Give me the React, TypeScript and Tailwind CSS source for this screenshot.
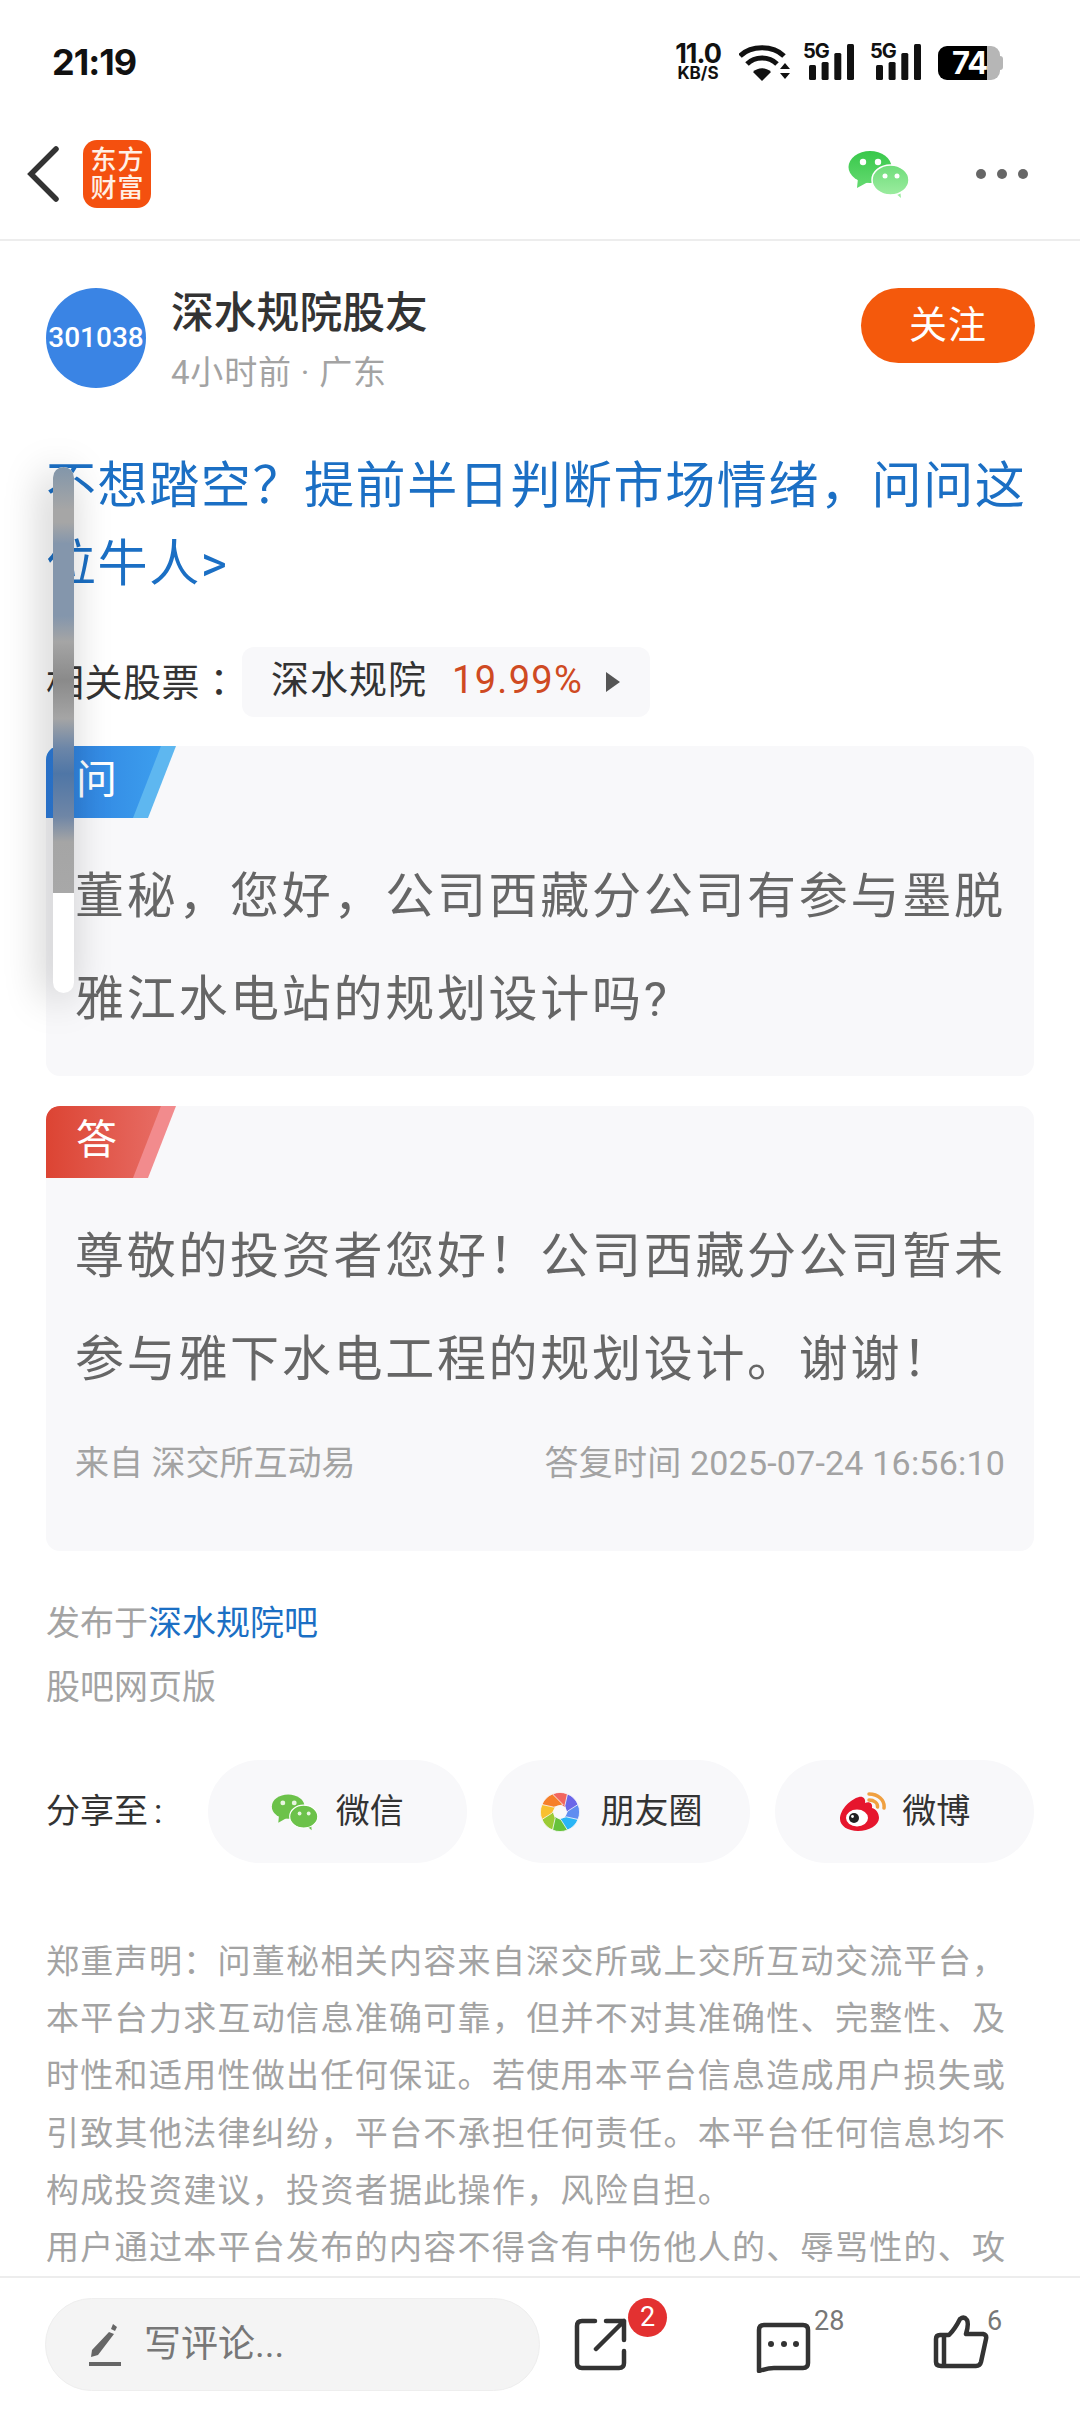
const cjk = "font-['Roboto','Noto_Sans_CJK_SC',sans-serif]";

function Signal() {
  return (
    <svg width="51" height="36" viewBox="0 0 51 36" className="fill-[#111]">
      <rect x="6" y="21" width="7" height="15" rx="1.5" />
      <rect x="18.6" y="18" width="7" height="18" rx="1.5" />
      <rect x="31.3" y="9" width="7" height="27" rx="1.5" />
      <rect x="44" y="0" width="7" height="36" rx="1.5" />
    </svg>
  );
}

function FiveG() {
  return (
    <div className="relative w-[51px] h-[36px]">
      <span className="absolute left-0 -top-[4px] text-[20px] leading-[22px] font-bold tracking-[-1px]">5G</span>
      <Signal />
    </div>
  );
}

function StatusBar() {
  return (
    <div className="h-[80px] shrink-0 pt-[44px] pl-[52px] pr-[77px] flex items-start justify-between">
      <span className="font-['Inter',sans-serif] font-bold text-[36px] leading-[36px] text-[#111] tracking-[-1px]">21:19</span>
      <div className="flex items-start font-['Inter',sans-serif] text-[#111]">
        <div className="flex flex-col items-center w-[50px] font-bold -mt-[2px]">
          <span className="text-[27px] leading-[24px] tracking-[-1px]">11.0</span>
          <span className="text-[17px] leading-[15px]">KB/S</span>
        </div>
        <svg width="52" height="37" viewBox="0 0 52 37" className="shrink-0 ml-[16px]">
          <path d="M1 12 C12 1 34 1 45 12" fill="none" stroke="#111" strokeWidth="5" />
          <path d="M8 20 C16 12 30 12 38 20" fill="none" stroke="#111" strokeWidth="5" />
          <path d="M14 28 C19 23 27 23 32 28 L23 37 Z" fill="#111" />
          <path d="M41 25 L46 19 L51 25 Z M41 29 L51 29 L46 35 Z" fill="#111" />
        </svg>
        <div className="ml-[12px]"><FiveG /></div>
        <div className="ml-[16px]"><FiveG /></div>
        <div className="relative w-[65px] h-[34px] ml-[17px] mt-[2px] flex">
          <div className="w-[49px] h-full bg-black rounded-l-[9px]" />
          <div className="w-[13px] h-full bg-[#b6b6b6] rounded-r-[9px]" />
          <div className="w-[3px] h-[14px] bg-[#b6b6b6] rounded-r-[3px] self-center" />
          <span className="absolute left-[14px] top-0 text-[31px] leading-[34px] font-bold text-white tracking-[-1px]">74</span>
        </div>
      </div>
    </div>
  );
}

type WeChatProps = { id: string; bigTop: string; bigBottom: string; smallTop: string; smallBottom: string; w: number; h: number; eye: string };

function WeChatLogo({ id, bigTop, bigBottom, smallTop, smallBottom, w, h, eye }: WeChatProps) {
  return (
    <svg width={w} height={h} viewBox="0 0 62 50" className="shrink-0">
      <defs>
        <linearGradient id={`${id}b`} x1="0" x2="0" y1="0" y2="1">
          <stop offset="0" stopColor={bigTop} />
          <stop offset="1" stopColor={bigBottom} />
        </linearGradient>
        <linearGradient id={`${id}s`} x1="0" x2="0" y1="0" y2="1">
          <stop offset="0" stopColor={smallTop} />
          <stop offset="1" stopColor={smallBottom} />
        </linearGradient>
      </defs>
      <path d="M10 29 L9 39 L20 33 Z" fill={bigBottom} />
      <ellipse cx="22" cy="18" rx="21.5" ry="16" fill={`url(#${id}b)`} />
      <circle cx="15" cy="13" r="3.2" fill={eye} />
      <circle cx="30" cy="13" r="3.2" fill={eye} />
      <path d="M46 43 L53 49 L52 40 Z" fill={smallBottom} />
      <ellipse cx="42.5" cy="31" rx="18.5" ry="15" fill={`url(#${id}s)`} stroke="#fff" strokeWidth="1.5" />
      <circle cx="37" cy="27" r="2.5" fill={eye} />
      <circle cx="49" cy="27" r="2.5" fill={eye} />
    </svg>
  );
}

function Header() {
  return (
    <div className={`h-[161px] shrink-0 border-b-2 border-[#ededed] flex items-center pl-[26px] pr-[52px] ${cjk}`}>
      <svg width="34" height="56" viewBox="0 0 34 56" className="mt-[28px]">
        <path d="M30 3 L5 28 L30 53" fill="none" stroke="#333" strokeWidth="5.5" strokeLinecap="round" />
      </svg>
      <div className="ml-[23px] mt-[28px] w-[68px] h-[68px] rounded-[14px] bg-[#f4500f] grid grid-cols-2 place-items-center px-[7px] py-[6px] text-[#fff0e6] text-[26px] leading-[28px] font-medium">
        <span>东</span><span>方</span><span>财</span><span>富</span>
      </div>
      <div className="ml-auto mt-[28px] flex items-center gap-[66px]">
        <WeChatLogo id="hd" bigTop="#38c84a" bigBottom="#5fd86c" smallTop="#6fdd7a" smallBottom="#9bec9f" w={62} h={50} eye="#ffffff" />
        <div className="flex gap-[11px]">
          <span className="w-[10px] h-[10px] rounded-full bg-[#666]" />
          <span className="w-[10px] h-[10px] rounded-full bg-[#666]" />
          <span className="w-[10px] h-[10px] rounded-full bg-[#666]" />
        </div>
      </div>
    </div>
  );
}

function Tag({ label, from, to, light }: { label: string; from: string; to: string; light: string }) {
  return (
    <div className="relative w-[130px] h-[72px]">
      <svg width="130" height="72" viewBox="0 0 130 72" className="absolute left-0 top-0">
        <defs>
          <linearGradient id={label} x1="0" x2="1" y1="0" y2="0">
            <stop offset="0" stopColor={from} />
            <stop offset="1" stopColor={to} />
          </linearGradient>
        </defs>
        <path d="M0 14 Q0 0 14 0 L130 0 L102 72 L0 72 Z" fill={light} />
        <path d="M0 14 Q0 0 14 0 L115 0 L87 72 L0 72 Z" fill={`url(#${label})`} />
      </svg>
      <span className="absolute left-[30px] top-0 text-[41px] leading-[68px] text-white">{label}</span>
    </div>
  );
}

function SharePill({ icon, label, gap }: { icon: React.ReactNode; label: string; gap: string }) {
  return (
    <div className={`flex-1 h-[103px] rounded-full bg-[#f8f8fa] flex items-center justify-center text-[34px] text-[#333] ${gap}`}>
      {icon}
      <span>{label}</span>
    </div>
  );
}

function Aperture() {
  const colors = ["#f2665f", "#6b66e8", "#5f8df0", "#2ab5f5", "#66c23b", "#9ccb35", "#f8c030", "#f67f2a"];
  return (
    <svg width="40" height="40" viewBox="-20.5 -20.5 41 41" className="shrink-0">
      {colors.map((c, i) => (
        <path key={c} d="M-7.65 -18.48 A20 20 0 0 1 7.65 -18.48 L7.5 -3 L-1 -8 Z" fill={c} stroke="#f8f8fa" strokeWidth="0.8" transform={`rotate(${i * 45})`} />
      ))}
      <circle r="7" fill="#f8f8fa" />
    </svg>
  );
}

function Weibo() {
  return (
    <svg width="47" height="41" viewBox="0 0 47 41" className="shrink-0">
      <path d="M1 28 C1 18 12 8 20 6 C24 5 27 8 26 12 C30 10 34 12 33 17 C37 18 40 22 40 27 C40 34 30 40 19 40 C9 40 1 35 1 28 Z" fill="#e6162d" />
      <ellipse cx="18" cy="27" rx="11" ry="8.5" fill="#fff" />
      <circle cx="15" cy="27" r="5" fill="#222" />
      <circle cx="13.5" cy="25.5" r="1.4" fill="#fff" />
      <path d="M30 3 C39 3 46 9 45 17" fill="none" stroke="#f0a040" strokeWidth="3.5" strokeLinecap="round" />
      <path d="M30 9 C35 9 39 12 38.5 16" fill="none" stroke="#f0a040" strokeWidth="3.5" strokeLinecap="round" />
    </svg>
  );
}

function Content() {
  return (
    <div className={`flex-1 min-h-0 overflow-hidden px-[46px] ${cjk}`}>
      <div className="pt-[46px] flex items-start">
        <div className="w-[100px] h-[100px] mt-[1px] shrink-0 rounded-full bg-[#3a84e4] flex items-center justify-center text-white text-[28px] font-medium">301038</div>
        <div className="ml-[25px] -mt-[3px]">
          <div className="text-[42.8px] leading-[58px] text-[#333] font-medium">深水规院股友</div>
          <div className="text-[33px] leading-[44px] mt-[9px] text-[#a3a3a3] tracking-[0.8px]">4小时前 · 广东</div>
        </div>
        <div className="ml-auto mr-[-1px] mt-[1px] w-[174px] h-[75px] rounded-full bg-[#f4590c] flex items-center justify-center text-white text-[38px] tracking-[1px]">关注</div>
      </div>

      <div className="mt-[52px] text-[#1b6fc4] text-[50px] leading-[78px] tracking-[1.6px]">不想踏空？提前半日判断市场情绪，问问这位牛人&gt;</div>

      <div className="mt-[44px] flex items-center h-[70px]">
        <span className="text-[38px] leading-[66px] self-start text-[#333] tracking-[0.5px] w-[196px]">相关股票<span className="font-['Noto_Sans_CJK_TC',sans-serif]">：</span></span>
        <div className="w-[408px] h-[70px] rounded-[12px] bg-[#f8f8fa] flex items-center pl-[29px] pr-[30px] text-[38px]">
          <span className="text-[#333] tracking-[1px] -mt-[3px]">深水规院</span>
          <span className="ml-[25px] text-[#cf4a22] tracking-[1.3px] -mt-[3px]">19.99%</span>
          <svg width="14" height="20" viewBox="0 0 14 20" className="ml-auto">
            <path d="M0 0 L14 10 L0 20 Z" fill="#555" />
          </svg>
        </div>
      </div>

      <div className="mt-[29px] h-[330px] rounded-[14px] bg-[#f8f8fa] overflow-hidden">
        <Tag label="问" from="#2d7cdc" to="#3c9eee" light="#5eb7f0" />
        <p className="mt-[27px] pl-[29px] pr-[20px] text-[49px] leading-[103px] text-[#666] tracking-[2.7px]">董秘，您好，公司西藏分公司有参与墨脱雅江水电站的规划设计吗?</p>
      </div>

      <div className="mt-[30px] h-[445px] rounded-[14px] bg-[#f8f8fa] overflow-hidden">
        <Tag label="答" from="#dc4433" to="#e76c64" light="#f28b8d" />
        <p className="mt-[27px] pl-[29px] pr-[20px] text-[49px] leading-[103px] text-[#666] tracking-[2.7px]">尊敬的投资者您好！公司西藏分公司暂未参与雅下水电工程的规划设计。谢谢！</p>
        <div className="mt-[27px] pl-[29px] pr-[29px] flex justify-between text-[34px] leading-[50px] text-[#a3a3a3]">
          <span>来自 深交所互动易</span>
          <span className="tracking-[0.2px]">答复时间 2025-07-24 16:56:10</span>
        </div>
      </div>

      <div className="mt-[41px] text-[34px] leading-[62px] text-[#a3a3a3]">
        <div>发布于<span className="text-[#1b6fc4]">深水规院吧</span></div>
        <div className="mt-[2px]">股吧网页版</div>
      </div>

      <div className="mt-[42px] flex items-center">
        <span className="w-[162px] shrink-0 text-[34px] text-[#333]">分享至<span className="ml-[6px]">:</span></span>
        <div className="flex-1 flex gap-[25px]">
          <SharePill gap="gap-[17px]" icon={<WeChatLogo id="sh" bigTop="#6cc24a" bigBottom="#6cc24a" smallTop="#6cc24a" smallBottom="#6cc24a" w={48} h={38} eye="#e8f5e0" />} label="微信" />
          <SharePill gap="gap-[21px]" icon={<Aperture />} label="朋友圈" />
          <SharePill gap="gap-[16px]" icon={<Weibo />} label="微博" />
        </div>
      </div>

      <div className="mt-[70px] text-[33px] leading-[57.2px] text-[#a3a3a3] tracking-[1.3px]">
        <p>郑重声明：问董秘相关内容来自深交所或上交所互动交流平台，本平台力求互动信息准确可靠，但并不对其准确性、完整性、及时性和适用性做出任何保证。若使用本平台信息造成用户损失或引致其他法律纠纷，平台不承担任何责任。本平台任何信息均不构成投资建议，投资者据此操作，风险自担。</p>
        <p>用户通过本平台发布的内容不得含有中伤他人的、辱骂性的、攻</p>
      </div>
    </div>
  );
}

function BottomBar() {
  return (
    <div className={`h-[136px] shrink-0 bg-white border-t-2 border-[#ededed] flex items-start pl-[45px] relative ${cjk}`}>
      <div className="mt-[20px] w-[495px] h-[93px] rounded-full bg-[#f4f4f4] border border-[#eeeeee] flex items-center pl-[42px] text-[37px] text-[#777] gap-[22px]">
        <svg width="34" height="44" viewBox="0 0 34 42" className="shrink-0">
          <path d="M25 0 L29 3 L27 7 L23 5 Z M21 8 L26 10 L10 31 L3 33 L4 26 Z" fill="#666" />
          <rect x="1" y="38" width="32" height="4" fill="#666" />
        </svg>
        <span>写评论...</span>
      </div>

      <div className="relative ml-[34px] mt-[40px] w-[53px] h-[53px]">
        <svg width="53" height="53" viewBox="0 0 53 53" fill="none" stroke="#333" strokeWidth="4.5" strokeLinecap="round" strokeLinejoin="round">
          <path d="M21 3 H8 Q3 3 3 8 V45 Q3 50 8 50 H45 Q50 50 50 45 V33" />
          <path d="M32 3 H50 V22 M50 3 L22 31" />
        </svg>
        <span className="absolute left-[54px] -top-[20px] w-[39px] h-[39px] rounded-full bg-[#e33131] text-white text-[27px] leading-[39px] text-center">2</span>
      </div>

      <div className="relative ml-[129px] mt-[44px] w-[55px] h-[51px]">
        <svg width="55" height="51" viewBox="0 0 55 51" fill="none" stroke="#333" strokeWidth="4.5" strokeLinejoin="round">
          <path d="M8 3 H47 Q52 3 52 8 V41 Q52 46 47 46 H18 Q12 46 3 49 V8 Q3 3 8 3 Z" />
          <circle cx="15" cy="22" r="3" fill="#333" stroke="none" />
          <circle cx="28" cy="22" r="3" fill="#333" stroke="none" />
          <circle cx="40" cy="22" r="3" fill="#333" stroke="none" />
        </svg>
        <span className="absolute left-[58px] -top-[19px] text-[27px] leading-[36px] text-[#777]">28</span>
      </div>

      <div className="relative ml-[122px] mt-[37px] w-[56px] h-[55px]">
        <svg width="56" height="55" viewBox="0 0 56 55" fill="none" stroke="#333" strokeWidth="4.5" strokeLinejoin="round">
          <path d="M3 24 Q3 20 7 20 H16 C22 14 25 8 27 4 Q31 1 34 5 Q36 9 33 19 H50 Q54 20 53 24 L48 47 Q47 51 43 51 H8 Q3 51 3 47 Z" />
          <path d="M11 21 V51" />
        </svg>
        <span className="absolute left-[54px] -top-[12px] text-[27px] leading-[36px] text-[#777]">6</span>
      </div>
    </div>
  );
}

function ScrollOverlay() {
  return (
    <div className="absolute left-[53px] top-[467px] w-[21px] h-[526px] rounded-full overflow-hidden bg-white shadow-[-6px_6px_40px_rgba(0,0,0,0.28)]">
      <div className="h-[426px] bg-[linear-gradient(180deg,#8296aa_0%,#a6a6a6_10%,#a6a6a6_13%,#8496ac_18%,#8496ac_35%,#a5a5a5_41%,#8a8a8a_50%,#a5a5a5_59%,#6c86a8_66%,#4f76a6_72%,#6f86a6_82%,#a5a5a5_88%,#a8a8a8_100%)]" />
    </div>
  );
}

export default function App() {
  return (
    <div className="relative w-[1080px] h-[2412px] bg-white overflow-hidden flex flex-col">
      <StatusBar />
      <Header />
      <Content />
      <BottomBar />
      <ScrollOverlay />
    </div>
  );
}
